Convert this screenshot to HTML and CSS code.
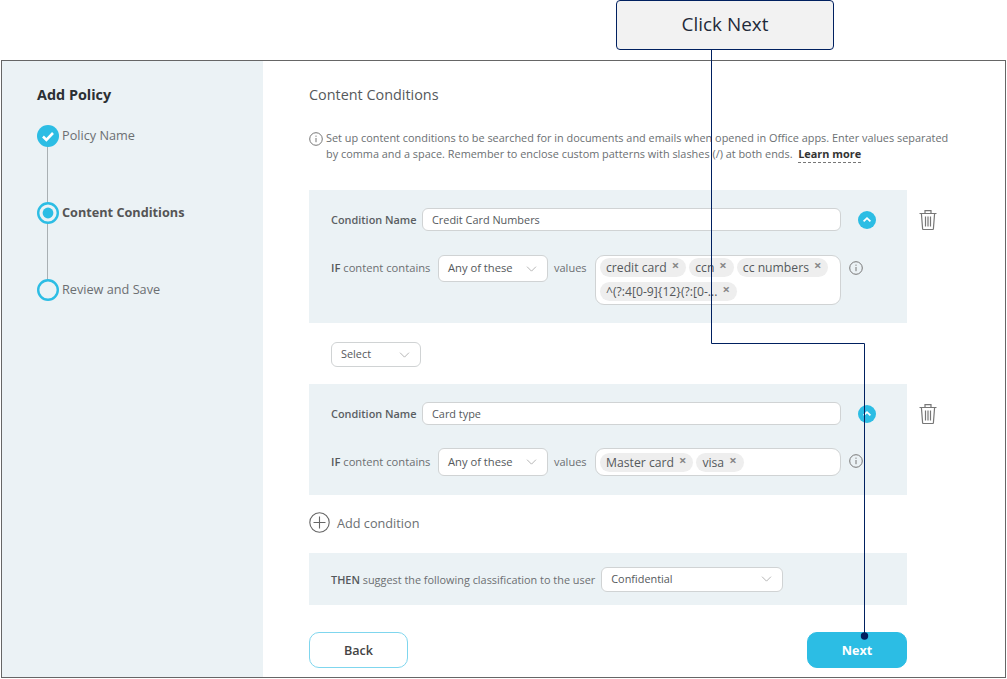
FILE: index.html
```html
<!DOCTYPE html>
<html lang="en">
<head>
<meta charset="utf-8">
<title>Add Policy</title>
<link rel="stylesheet" href="styles.css">
</head>
<body>
<div class="callout">Click Next</div>
<div class="frame">
  <aside class="side">
    <h2 class="side-title">Add Policy</h2>
    <ol class="steps">
      <li class="step">
        <svg class="step-icon" viewBox="0 0 22 22"><circle cx="11" cy="11" r="11" fill="#2cbde4"/><path d="M6 11.5l3.4 3.4L16 8" fill="none" stroke="#fff" stroke-width="2.6"/></svg>
        <span>Policy Name</span>
      </li>
      <li class="step">
        <svg class="step-icon" viewBox="0 0 22 22"><circle cx="11" cy="11" r="9.8" fill="#ebf2f5" stroke="#2cbde4" stroke-width="2.4"/><circle cx="11" cy="11" r="5.4" fill="#2cbde4"/></svg>
        <span class="step-active">Content Conditions</span>
      </li>
      <li class="step">
        <svg class="step-icon" viewBox="0 0 22 22"><circle cx="11" cy="11" r="9.8" fill="#ebf2f5" stroke="#2cbde4" stroke-width="2.4"/></svg>
        <span>Review and Save</span>
      </li>
    </ol>
  </aside>
  <main class="main">
    <h1 class="main-title">Content Conditions</h1>
    <div class="intro">
      <svg class="info intro-info" viewBox="0 0 14 14"><circle cx="7" cy="7" r="6.3" fill="none" stroke="#777" stroke-width="1"/><path d="M7 6v4.2M7 3.6v1.2" stroke="#777" stroke-width="1"/></svg>
      <p class="intro-text">Set up content conditions to be searched for in documents and emails when opened in Office apps. Enter values separated by comma and a space. Remember to enclose custom patterns with slashes (/) at both ends. &nbsp;<a class="learn">Learn more</a></p>
    </div>

    <div class="cond-row">
      <section class="panel cond cond-first">
        <div class="name-row">
          <label class="lbl">Condition Name</label>
          <div class="field name-field">Credit Card Numbers</div>
          <svg class="toggle" viewBox="0 0 18 18"><circle cx="9" cy="9" r="9" fill="#2cbde4"/><path d="M5.6 10.4L9 7.2l3.4 3.2" fill="none" stroke="#fff" stroke-width="1.8"/></svg>
        </div>
        <div class="if-row">
          <span class="if-label"><b>IF</b> content contains</span>
          <div class="field select sel-any"><span>Any of these</span><svg class="chev" viewBox="0 0 12 7"><path d="M.8.8L6 6l5.2-5.2" fill="none" stroke="#aaa" stroke-width="1"/></svg></div>
          <span class="values-label">values</span>
          <div class="field tags">
            <span class="tag">credit card<i class="x">×</i></span>
            <span class="tag">ccn<i class="x">×</i></span>
            <span class="tag">cc numbers<i class="x">×</i></span>
            <span class="tag">^(?:4[0-9]{12}(?:[0-...<i class="x">×</i></span>
          </div>
          <svg class="info if-info" viewBox="0 0 14 14"><circle cx="7" cy="7" r="6.3" fill="none" stroke="#777" stroke-width="1"/><path d="M7 6v4.2M7 3.6v1.2" stroke="#777" stroke-width="1"/></svg>
        </div>
      </section>
      <svg class="trash" viewBox="0 0 18 21"><path d="M.5 4.5h17M6 4.2V1.6h6v2.6M2.4 4.5l1.2 15.2c0 .5.4.8.8.8h9.2c.4 0 .8-.3.8-.8l1.2-15.2M6.5 7.5v10M9 7.5v10M11.5 7.5v10" fill="none" stroke="#777" stroke-width="1.2"/></svg>
    </div>

    <div class="field select sel-op"><span>Select</span><svg class="chev" viewBox="0 0 12 7"><path d="M.8.8L6 6l5.2-5.2" fill="none" stroke="#aaa" stroke-width="1"/></svg></div>

    <div class="cond-row">
      <section class="panel cond cond-second">
        <div class="name-row">
          <label class="lbl">Condition Name</label>
          <div class="field name-field">Card type</div>
          <svg class="toggle" viewBox="0 0 18 18"><circle cx="9" cy="9" r="9" fill="#2cbde4"/><path d="M5.6 10.4L9 7.2l3.4 3.2" fill="none" stroke="#fff" stroke-width="1.8"/></svg>
        </div>
        <div class="if-row">
          <span class="if-label"><b>IF</b> content contains</span>
          <div class="field select sel-any"><span>Any of these</span><svg class="chev" viewBox="0 0 12 7"><path d="M.8.8L6 6l5.2-5.2" fill="none" stroke="#aaa" stroke-width="1"/></svg></div>
          <span class="values-label">values</span>
          <div class="field tags">
            <span class="tag">Master card<i class="x">×</i></span>
            <span class="tag">visa<i class="x">×</i></span>
          </div>
          <svg class="info if-info" viewBox="0 0 14 14"><circle cx="7" cy="7" r="6.3" fill="none" stroke="#777" stroke-width="1"/><path d="M7 6v4.2M7 3.6v1.2" stroke="#777" stroke-width="1"/></svg>
        </div>
      </section>
      <svg class="trash" viewBox="0 0 18 21"><path d="M.5 4.5h17M6 4.2V1.6h6v2.6M2.4 4.5l1.2 15.2c0 .5.4.8.8.8h9.2c.4 0 .8-.3.8-.8l1.2-15.2M6.5 7.5v10M9 7.5v10M11.5 7.5v10" fill="none" stroke="#777" stroke-width="1.2"/></svg>
    </div>

    <div class="add">
      <svg class="add-icon" viewBox="0 0 21 21"><circle cx="10.5" cy="10.5" r="9.7" fill="none" stroke="#666" stroke-width="1.1"/><path d="M10.5 4.5v12M4.5 10.5h12" stroke="#666" stroke-width="1.1"/></svg>
      <span>Add condition</span>
    </div>

    <section class="panel then">
      <span class="if-label then-label"><b>THEN</b> suggest the following classification to the user</span>
      <div class="field select sel-class"><span>Confidential</span><svg class="chev" viewBox="0 0 12 7"><path d="M.8.8L6 6l5.2-5.2" fill="none" stroke="#aaa" stroke-width="1"/></svg></div>
    </section>

    <div class="actions">
      <button class="btn btn-back">Back</button>
      <button class="btn btn-next">Next</button>
    </div>
  </main>
</div>
<svg class="connector" viewBox="0 0 1007 679"><path d="M711.5 50V343.5H864.5V636" fill="none" stroke="#002060" stroke-width="1"/><circle cx="864.5" cy="636" r="3.7" fill="#002060"/></svg>
</body>
</html>
```
FILE: styles.css
```css
* { box-sizing: border-box; }
html, body { margin: 0; padding: 0; }
body {
  width: 1007px;
  height: 679px;
  position: relative;
  overflow: hidden;
  background: #fff;
  font-family: "Open Sans", sans-serif;
  color: #5c5c5c;
  font-size: 11px;
}
.callout {
  width: 218px;
  height: 50px;
  margin-left: 616px;
  padding-bottom: 2px;
  background: #f2f2f2;
  border: 1px solid #002060;
  border-radius: 4px;
  color: #1f2a3a;
  font-size: 18.9px;
  display: flex;
  align-items: center;
  justify-content: center;
}
.frame {
  width: 1005px;
  height: 618px;
  margin: 10px 0 0 1px;
  border: 1px solid #666;
  display: flex;
}
.side {
  width: 261px;
  flex: none;
  background: #ebf2f5;
  padding: 24px 0 0 35px;
}
.side-title {
  margin: 0;
  font-size: 14.4px;
  line-height: 19px;
  font-weight: 700;
  color: #2b2f33;
}
.steps {
  list-style: none;
  margin: 21px 0 0;
  padding: 0;
  position: relative;
}
.steps::before {
  content: "";
  position: absolute;
  left: 10px;
  top: 10px;
  height: 150px;
  width: 1px;
  background: #a9b0b3;
}
.step {
  position: relative;
  height: 77px;
  display: flex;
  align-items: flex-start;
  gap: 3px;
  font-size: 12.7px;
  line-height: 20px;
  color: #6b6f72;
}
.step-icon { width: 22px; height: 22px; flex: none; }
.step-active { font-weight: 700; color: #555; }
.main {
  flex: 1;
  padding: 24px 0 0 46px;
  min-width: 0;
}
.main-title {
  margin: 0;
  font-size: 14.4px;
  line-height: 19px;
  font-weight: 400;
  color: #55595c;
}
.intro {
  width: 640px;
  margin: 26px 0 28px;
  display: flex;
  align-items: flex-start;
  gap: 3px;
}
.info { width: 14px; height: 14px; flex: none; }
.intro-info { margin-top: 2px; }
.intro-text {
  margin: 0;
  font-size: 10.9px;
  line-height: 16px;
  color: #6b6f72;
}
.learn {
  color: #333;
  font-weight: 700;
  border-bottom: 1px dashed #777;
  padding-bottom: 1px;
}
.cond-row {
  display: flex;
  align-items: flex-start;
  gap: 12px;
}
.panel {
  width: 598px;
  flex: none;
  background: #ebf2f5;
  padding-left: 22px;
}
.cond-first { height: 133px; padding-top: 18px; }
.cond-second { height: 111px; padding-top: 18px; }
.name-row {
  display: flex;
  align-items: center;
  height: 23px;
}
.lbl {
  width: 91px;
  flex: none;
  font-size: 10.9px;
  font-weight: 600;
  color: #5a5e62;
}
.field {
  background: #fff;
  border: 1px solid #d0d3d4;
  border-radius: 6px;
  font-size: 10.9px;
  color: #55595c;
  display: flex;
  align-items: center;
}
.name-field {
  width: 419px;
  height: 23px;
  padding-left: 9px;
}
.toggle {
  width: 18px;
  height: 18px;
  margin-left: 17px;
  flex: none;
}
.if-row {
  display: flex;
  align-items: flex-start;
  margin-top: 24px;
}
.cond-second .if-row { margin-top: 23px; }
.if-label { font-size: 11.2px; line-height: 25px; color: #6b6f72; white-space: nowrap; }
.then-label { font-size: 10.88px; }
.if-label b { font-weight: 600; color: #55595c; }
.if-row .if-label { width: 107px; flex: none; }
.cond-second .if-label, .cond-second .values-label { line-height: 27px; }
.select {
  justify-content: space-between;
  padding: 0 10px 2px 9px;
  font-size: 11.2px;
}
.chev { width: 11px; height: 6px; flex: none; margin-top: 2px; }
.sel-any { width: 110px; height: 27px; flex: none; }
.cond-second .sel-any { height: 28px; }
.values-label {
  width: 47px;
  flex: none;
  padding-left: 6px;
  font-size: 11px;
  line-height: 25px;
  color: #6b6f72;
}
.tags {
  width: 246px;
  flex: none;
  flex-wrap: wrap;
  padding: 2px 4px 3px;
  gap: 5px 3px;
  border-radius: 9px;
}
.cond-second .tags { height: 28px; padding: 3px 4px 3px; }
.tag {
  height: 19px;
  padding: 0 7px 0 6px;
  background: #eee;
  border-radius: 10px;
  font-size: 12.2px;
  line-height: 19px;
  color: #55595c;
  white-space: nowrap;
  display: inline-flex;
  align-items: flex-start;
}
.x {
  font-style: normal;
  font-weight: 700;
  color: #888;
  font-size: 13px;
  line-height: 15px;
  margin-left: 5px;
}
.if-info { margin: 6px 0 0 8px; }
.trash {
  width: 18px;
  height: 21px;
  flex: none;
  margin-top: 19px;
}
.sel-op {
  width: 90px;
  height: 25px;
  margin: 19px 0 17px 22px;
  font-size: 10.9px;
}
.add {
  display: flex;
  align-items: center;
  gap: 7px;
  margin-top: 17px;
  height: 21px;
  font-size: 12.7px;
  color: #6b6f72;
}
.add-icon { width: 21px; height: 21px; flex: none; }
.then {
  height: 52px;
  margin-top: 20px;
  display: flex;
  align-items: center;
  gap: 6px;
}
.sel-class { width: 182px; height: 25px; flex: none; font-size: 10.9px; }
.actions {
  width: 598px;
  display: flex;
  justify-content: space-between;
  margin-top: 27px;
}
.btn {
  width: 100px;
  height: 36px;
  border-radius: 10px;
  font-family: inherit;
  font-size: 12.6px;
  font-weight: 600;
  padding: 0;
}
.btn-back { width: 99px; background: #fff; border: 1px solid #7fd6ee; color: #444; }
.btn-next { background: #2cbde4; border: 1px solid #2cbde4; color: #fff; font-weight: 700; }
.connector {
  position: absolute;
  left: 0;
  top: 0;
  width: 1007px;
  height: 679px;
  pointer-events: none;
}
```
